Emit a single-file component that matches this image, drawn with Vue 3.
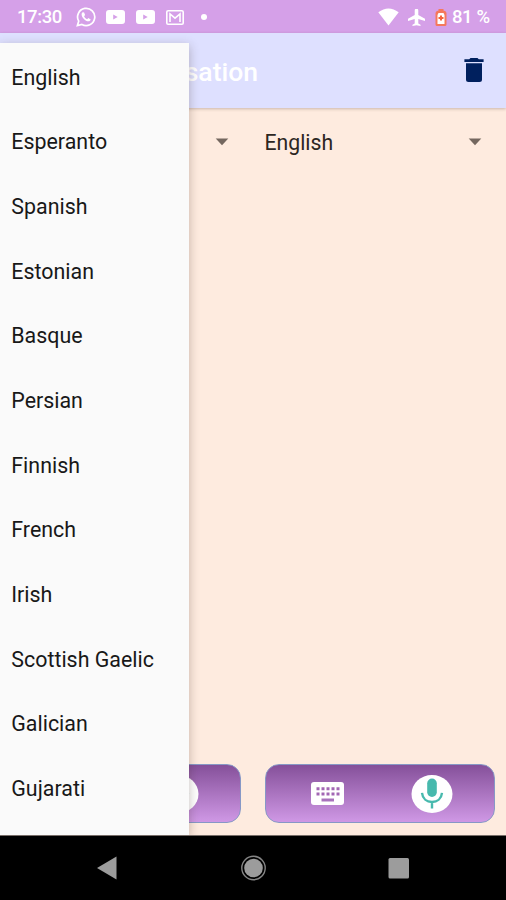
<script setup>
const languages = [
  'English', 'Esperanto', 'Spanish', 'Estonian', 'Basque', 'Persian',
  'Finnish', 'French', 'Irish', 'Scottish Gaelic', 'Galician', 'Gujarati',
]
const panels = ['source', 'target']
</script>

<template>
  <div class="screen">
    <header class="status">
      <span class="clock">17:30</span>
      <svg class="whatsapp" width="20" height="20" viewBox="0 0 20 20">
        <path d="M1.4 18.6 2.7 14.2A8.6 8.6 0 1 1 5.9 17.4Z" fill="none" stroke="#fff" stroke-width="1.7" />
        <path d="M6.9 5.2c-.7.3-1.4 1.1-1.3 2.2.2 3.3 3.8 6.6 6.7 6.9 1.2.1 2.2-.8 2.4-1.9l-2.3-1.3-1.3 1.2c-1.3-.5-2.5-1.7-3-3l1-1.2-1-2.7Z" fill="#fff" />
      </svg>
      <svg class="tube" width="19" height="14" viewBox="0 0 19 14">
        <path fill-rule="evenodd" fill="#fff" d="M3 0h13q3 0 3 3v8q0 3-3 3H3q-3 0-3-3V3q0-3 3-3Zm4.2 4.5v5l4.5-2.5Z" />
      </svg>
      <svg class="tube second" width="19" height="14" viewBox="0 0 19 14">
        <path fill-rule="evenodd" fill="#fff" d="M3 0h13q3 0 3 3v8q0 3-3 3H3q-3 0-3-3V3q0-3 3-3Zm4.2 4.5v5l4.5-2.5Z" />
      </svg>
      <svg class="mail" width="18" height="15" viewBox="0 0 18 15">
        <rect x=".8" y=".8" width="16.4" height="13.4" rx="1.3" fill="none" stroke="#fff" stroke-width="1.6" />
        <path d="M4 12V4l5 4.2L14 4v8" fill="none" stroke="#fff" stroke-width="1.6" />
      </svg>
      <span class="dot"></span>
      <svg class="wifi" width="21" height="18" viewBox="0 0 21 18">
        <path fill="#fff" d="M.3 4.2Q10.5-3.4 20.7 4.2L10.5 17.5Z" />
      </svg>
      <svg class="plane" width="17" height="17" viewBox="2 2 19 20" preserveAspectRatio="none">
        <path fill="#fff" d="M21 16v-2.5l-7.5-4.500V3.7a2 2 0 0 0-4 0V9L2 13.500V16l7.500-2.200V19l-2.500 1.500V22l4.500-1 4.500 1v-1.500L13.500 19v-5.200Z" />
      </svg>
      <svg class="battery" width="12" height="17" viewBox="0 0 12 17">
        <path fill="#f5785c" d="M3.5 0h5v1.5q3 .5 3 3v11q0 1.5-1.5 1.5H2Q.5 17 .5 15.5v-11q0-2.5 3-3Z" />
        <path fill="#fff" d="M3.5 4h5l1 2v9h-7V6Z" />
        <path d="M6 6.5v5M3.5 9h5" stroke="#f5643c" stroke-width="2" />
      </svg>
      <span class="percent">81<span class="sign">%</span></span>
    </header>

    <div class="appbar">
      <h1>Conversation</h1>
      <svg class="trash" width="20" height="26" viewBox="0 0 20 26">
        <path fill="#00205e" d="M.4 2.2h4.800L6.500 1h7l1.300 1.200h4.800v2.700H.4ZM2 6.200h16v16.300q0 2.500-2.500 2.500h-11Q2 25 2 22.500Z" />
      </svg>
    </div>

    <main>
      <div class="selectors">
        <div class="select">
          <span></span>
          <svg width="14" height="8" viewBox="0 0 14 8"><path d="M.7.5h12.600L7 7.200Z" fill="#74675f" /></svg>
        </div>
        <div class="select">
          <span>English</span>
          <svg width="14" height="8" viewBox="0 0 14 8"><path d="M.7.5h12.600L7 7.200Z" fill="#74675f" /></svg>
        </div>
      </div>
      <div class="panels">
        <div v-for="panel in panels" :key="panel" class="panel" :class="panel">
          <svg class="keyboard" width="33" height="23" viewBox="0 0 33 23">
            <rect width="33" height="23" rx="3" fill="#fff" />
            <path d="M5.5 6.8h23M5.5 12h23" stroke="#a266b4" stroke-width="3" stroke-dasharray="3 2" />
            <path d="M10.5 18h12.5" stroke="#a872bc" stroke-width="3" />
          </svg>
          <svg class="mic" width="42" height="38" viewBox="0 0 42 38">
            <ellipse cx="21" cy="19" rx="20.5" ry="19" fill="#fff" />
            <rect x="16.2" y="3.5" width="9.6" height="18.5" rx="4.8" fill="#47b9ad" />
            <path d="M11 17.8c.6 6 4.8 9.2 10 9.2s9.4-3.200 10-9.200M21 27v6.500" fill="none" stroke="#47b9ad" stroke-width="2.4" />
          </svg>
        </div>
      </div>
    </main>

    <nav>
      <svg width="20" height="24" viewBox="0 0 20 24"><path d="M0 12 19.5.6v22.8Z" fill="#9c9c9c" /></svg>
      <svg width="26" height="26" viewBox="0 0 26 26">
        <circle cx="13.5" cy="13" r="11.7" fill="none" stroke="#858585" stroke-width="1.4" />
        <circle cx="13.5" cy="13" r="9.3" fill="#9c9c9c" />
      </svg>
      <svg width="22" height="22" viewBox="0 0 22 22"><rect x=".5" y="1" width="20.5" height="20.5" rx="1.5" fill="#9c9c9c" /></svg>
    </nav>

    <div class="clip">
      <ul class="menu">
        <li v-for="language in languages" :key="language">{{ language }}</li>
      </ul>
    </div>
  </div>
</template>

<style>
body { margin: 0; }
</style>

<style scoped>
.screen {
  position: relative;
  width: 506px;
  height: 900px;
  display: flex;
  flex-direction: column;
  overflow: hidden;
  background: #feebdf;
  font-family: Roboto, sans-serif;
}
svg { display: block; flex: none; }
.status {
  height: 33px;
  box-sizing: border-box;
  flex: none;
  display: flex;
  align-items: center;
  padding: 1px 16px 0 17px;
  background: #d5a0e8;
  color: #fff;
  font-size: 18.5px;
  font-weight: 500;
}
.clock { width: 59px; letter-spacing: -.4px; }
.tube { margin-left: 10px; }
.tube.second { margin-left: 11px; }
.mail { margin-left: 11px; }
.dot { width: 6px; height: 6px; margin-left: 17px; border-radius: 50%; background: #fff; }
.wifi { margin-left: auto; }
.plane { margin-left: 9px; }
.battery { margin-left: 10px; }
.percent { display: flex; justify-content: space-between; width: 38px; margin-left: 5px; letter-spacing: -.5px; }
.sign { letter-spacing: 0; }
.appbar {
  position: relative;
  height: 75px;
  flex: none;
  display: flex;
  align-items: center;
  justify-content: space-between;
  padding: 0 22px 0 20px;
  background: #dee0ff;
  box-shadow: 0 1px 3px rgba(80, 60, 50, .3);
}
h1 { width: 238px; margin: 2px 0 0; text-align: right; color: #fff; font-size: 26.5px; font-weight: 500; }
.trash { margin-bottom: 2px; }
main { flex: 1; display: flex; flex-direction: column; justify-content: space-between; }
.selectors { display: flex; height: 68px; }
.select {
  flex: 1;
  display: flex;
  align-items: center;
  justify-content: space-between;
  padding: 0 24px 0 11.5px;
  font-size: 21.2px;
  color: #2c2622;
}
.panels { display: flex; gap: 24px; padding: 0 11.5px 13px 12px; }
.panel {
  flex: 1;
  height: 59px;
  box-sizing: border-box;
  display: flex;
  align-items: center;
  justify-content: space-between;
  padding: 0 41px 0 45px;
  border: 1px solid #8798c6;
  border-radius: 14px;
  background: linear-gradient(#85509a, #cf98e5);
}
nav {
  height: 64px;
  box-sizing: border-box;
  flex: none;
  display: flex;
  align-items: center;
  justify-content: space-between;
  padding: 0 96px 0 97px;
  background: #000;
  box-shadow: 0 -1px 0 #776d68;
}
.clip {
  position: absolute;
  top: 33px;
  left: 0;
  width: 210px;
  height: 802px;
  overflow: hidden;
}
.menu {
  width: 189px;
  height: 792px;
  box-sizing: border-box;
  margin: 10px 0 0;
  padding: 2.6px 0 0 11.3px;
  list-style: none;
  background: #fafafa;
  box-shadow: 0 3px 10px rgba(60, 40, 30, .3);
}
li { height: 64.7px; line-height: 64.7px; font-size: 21.4px; color: #181818; }
</style>
